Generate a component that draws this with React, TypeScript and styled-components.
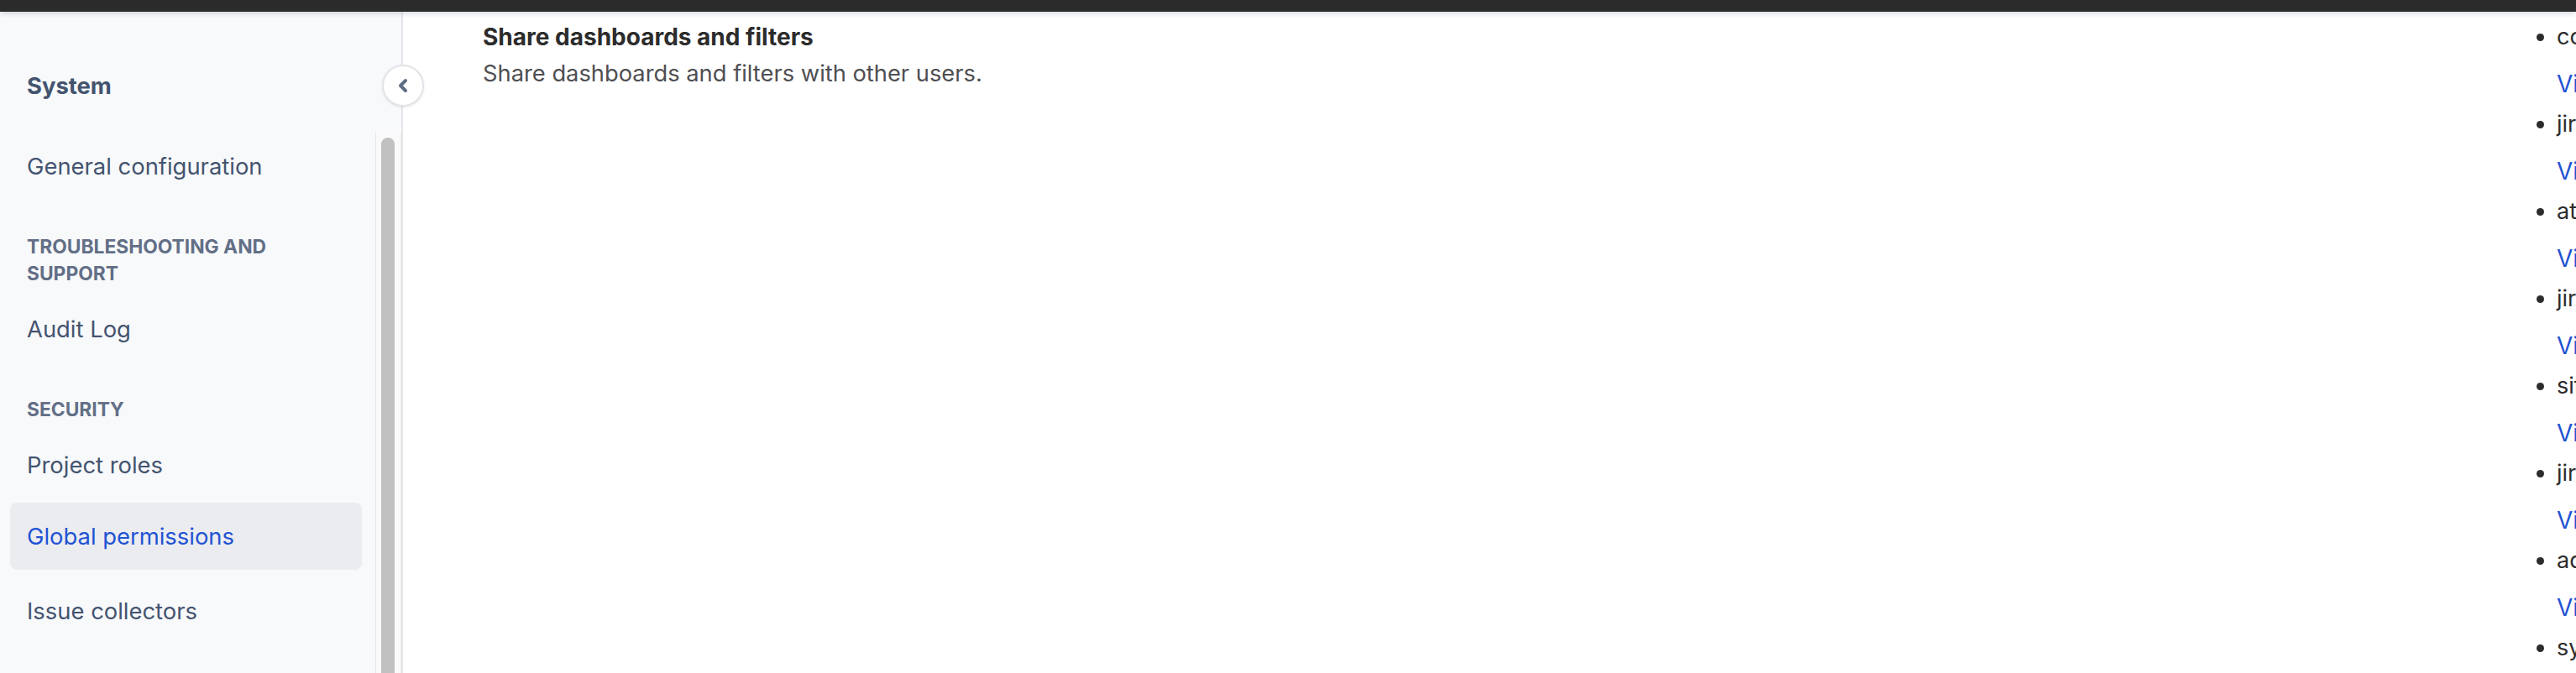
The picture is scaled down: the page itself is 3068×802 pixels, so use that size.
import React from "react";
import styled, { createGlobalStyle } from "styled-components";

const GlobalStyle = createGlobalStyle`
  html, body {
    margin: 0;
    padding: 0;
    overflow: hidden;
    background: #ffffff;
  }
  body {
    font-family: Inter, "Noto Sans", "Liberation Sans", sans-serif;
    -webkit-font-smoothing: antialiased;
  }
  * { box-sizing: border-box; }
`;

const Page = styled.div`
  width: 3068px;
  height: 802px;
  display: flex;
  flex-direction: column;
  overflow: hidden;
`;

const TopBar = styled.div`
  height: 14px;
  flex: none;
  background: #2b2b2b;
  box-shadow: 0 2px 6px rgba(9, 30, 66, 0.18);
  position: relative;
  z-index: 2;
`;

const Body = styled.div`
  flex: 1;
  display: flex;
  min-height: 0;
`;

const Sidebar = styled.aside`
  width: 480px;
  flex: none;
  background: #f8f9fb;
  border-right: 2px solid #e4e6ea;
  display: flex;
  flex-direction: column;
  position: relative;
`;

const SidebarHeader = styled.div`
  height: 144px;
  flex: none;
  display: flex;
  align-items: center;
  padding: 32px 0 0 32px;
  font-size: 27.4px;
  font-weight: 700;
  color: #44546f;
`;

const CollapseButton = styled.button`
  position: absolute;
  top: 63px;
  right: -27px;
  width: 50px;
  height: 50px;
  border-radius: 50%;
  border: 2px solid #e3e4e8;
  background: #ffffff;
  box-shadow: 0 1px 3px rgba(9, 30, 66, 0.1);
  display: flex;
  align-items: center;
  justify-content: center;
  padding: 0;
  z-index: 3;
`;

const ScrollArea = styled.div`
  flex: 1;
  display: flex;
  min-height: 0;
`;

const NavList = styled.nav`
  flex: 1;
  display: flex;
  flex-direction: column;
  padding: 0 16px 0 12px;
`;

const NavItem = styled.a<{ $active?: boolean; $gap?: number }>`
  height: 80px;
  flex: none;
  display: flex;
  align-items: center;
  padding-left: 20px;
  margin-top: ${({ $gap }) => $gap ?? 0}px;
  border-radius: 8px;
  font-size: 27.4px;
  color: ${({ $active }) => ($active ? "#1f53d3" : "#44546f")};
  background: ${({ $active }) => ($active ? "#ebecf0" : "transparent")};
  text-decoration: none;
`;

const SectionHeading = styled.div`
  margin: 40px 0 10px;
  padding-left: 20px;
  font-size: 22.8px;
  line-height: 32px;
  font-weight: 700;
  color: #626f86;
  text-transform: uppercase;
  width: 340px;
`;

const ScrollRail = styled.div`
  width: 31px;
  flex: none;
  background: #fafafa;
  border-left: 1px solid #e6e6e6;
  border-right: 1px solid #ececec;
  padding: 6px 7px 0 6px;
`;

const Thumb = styled.div`
  width: 16px;
  height: 1000px;
  background: #c1c1c1;
  border-radius: 8px 8px 0 0;
`;

const Main = styled.main`
  flex: 1;
  min-width: 0;
  padding: 6px 0 0 95px;
  background: #ffffff;
`;

const PermissionRow = styled.div`
  display: grid;
  grid-template-columns: 2410px 600px;
  align-items: start;
`;

const PermissionCell = styled.div`
  padding-top: 2px;
`;

const PermissionTitle = styled.div`
  font-size: 28px;
  line-height: 44px;
  font-weight: 700;
  color: #2c2c2c;
`;

const PermissionDesc = styled.div`
  font-size: 27.3px;
  line-height: 44px;
  color: #4f4f52;
`;

const GroupList = styled.ul`
  margin: 0;
  padding: 0 0 0 60px;
  list-style: disc;
  color: #2c2c2c;
  white-space: nowrap;
`;

const GroupItem = styled.li`
  font-size: 27px;
  line-height: 48px;
`;

const GroupLink = styled.a`
  display: block;
  padding-top: 8px;
  font-size: 28px;
  line-height: 48px;
  color: #1f53d3;
  text-decoration: none;
`;

const groups = [
  "confluence-users",
  "jira-software-users",
  "atlassian-addons-admin",
  "jira-admins",
  "site-admins",
  "jira-servicemanagement-users",
  "administrators",
  "system-administrators",
];

const ChevronLeft = () => (
  <svg width="14" height="18" viewBox="0 0 14 18" fill="none">
    <path
      d="M10 3 L4 9 L10 15"
      stroke="#5e6c84"
      strokeWidth="4"
      strokeLinecap="round"
      strokeLinejoin="round"
    />
  </svg>
);

export default function App() {
  return (
    <Page>
      <GlobalStyle />
      <TopBar />
      <Body>
        <Sidebar>
          <SidebarHeader>System</SidebarHeader>
          <CollapseButton aria-label="Collapse sidebar">
            <ChevronLeft />
          </CollapseButton>
          <ScrollArea>
            <NavList>
              <NavItem>General configuration</NavItem>
              <SectionHeading>Troubleshooting and support</SectionHeading>
              <NavItem>Audit Log</NavItem>
              <SectionHeading>Security</SectionHeading>
              <NavItem>Project roles</NavItem>
              <NavItem $active $gap={5}>
                Global permissions
              </NavItem>
              <NavItem $gap={9}>Issue collectors</NavItem>
            </NavList>
            <ScrollRail>
              <Thumb />
            </ScrollRail>
          </ScrollArea>
        </Sidebar>
        <Main>
          <PermissionRow>
            <PermissionCell>
              <PermissionTitle>Share dashboards and filters</PermissionTitle>
              <PermissionDesc>
                Share dashboards and filters with other users.
              </PermissionDesc>
            </PermissionCell>
            <GroupList>
              {groups.map((g) => (
                <GroupItem key={g}>
                  {g}
                  <GroupLink>View users</GroupLink>
                </GroupItem>
              ))}
            </GroupList>
          </PermissionRow>
        </Main>
      </Body>
    </Page>
  );
}
